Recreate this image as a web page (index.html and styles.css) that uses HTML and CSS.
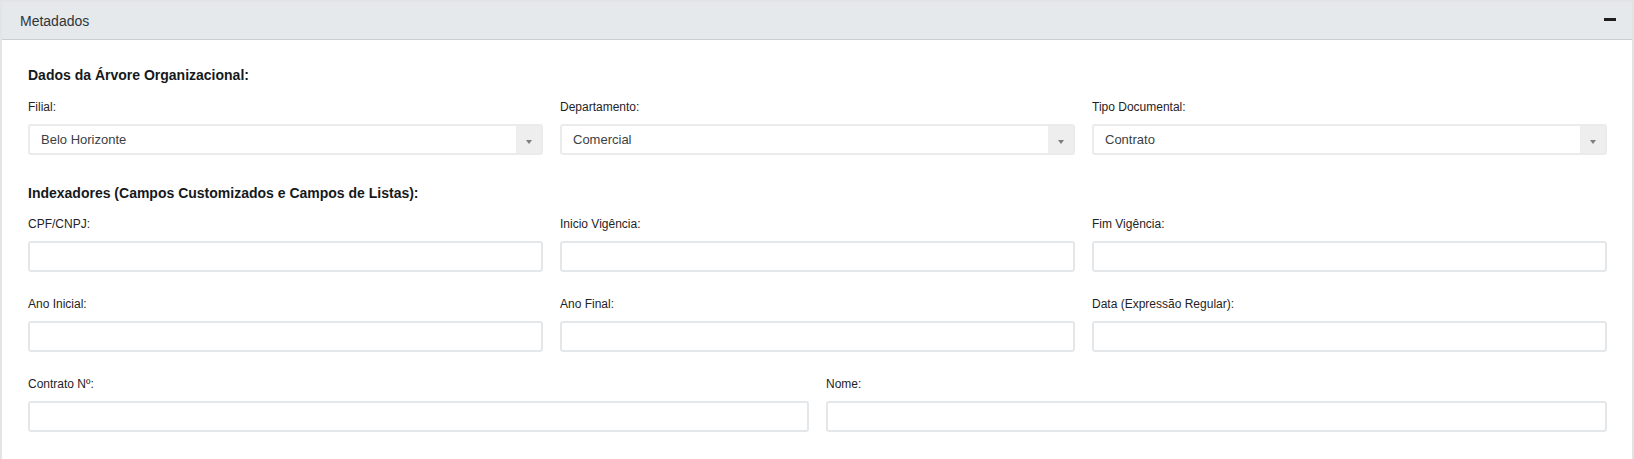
FILE: index.html
```html
<!DOCTYPE html>
<html lang="pt-BR">
<head>
<meta charset="utf-8">
<title>Metadados</title>
<link rel="stylesheet" href="styles.css">
</head>
<body>
<div class="card">
  <div class="card-header">
    <span class="card-title">Metadados</span>
    <span class="collapse-icon" aria-label="Recolher"></span>
  </div>
  <div class="card-body">
    <div class="section-title">Dados da Árvore Organizacional:</div>
    <div class="grid grid-3">
      <div class="field">
        <label class="field-label">Filial:</label>
        <div class="select"><span class="select-value">Belo Horizonte</span><span class="select-arrow"></span></div>
      </div>
      <div class="field">
        <label class="field-label">Departamento:</label>
        <div class="select"><span class="select-value">Comercial</span><span class="select-arrow"></span></div>
      </div>
      <div class="field">
        <label class="field-label">Tipo Documental:</label>
        <div class="select"><span class="select-value">Contrato</span><span class="select-arrow"></span></div>
      </div>
    </div>

    <div class="section-title section-gap">Indexadores (Campos Customizados e Campos de Listas):</div>
    <div class="grid grid-3 rows">
      <div class="field">
        <label class="field-label">CPF/CNPJ:</label>
        <input class="input" type="text">
      </div>
      <div class="field">
        <label class="field-label">Inicio Vigência:</label>
        <input class="input" type="text">
      </div>
      <div class="field">
        <label class="field-label">Fim Vigência:</label>
        <input class="input" type="text">
      </div>
      <div class="field">
        <label class="field-label">Ano Inicial:</label>
        <input class="input" type="text">
      </div>
      <div class="field">
        <label class="field-label">Ano Final:</label>
        <input class="input" type="text">
      </div>
      <div class="field">
        <label class="field-label">Data (Expressão Regular):</label>
        <input class="input" type="text">
      </div>
    </div>
    <div class="grid grid-2 last-row">
      <div class="field">
        <label class="field-label">Contrato Nº:</label>
        <input class="input" type="text">
      </div>
      <div class="field">
        <label class="field-label">Nome:</label>
        <input class="input" type="text">
      </div>
    </div>
  </div>
</div>
</body>
</html>
```
FILE: styles.css
```css
* { box-sizing: border-box; }
html, body { margin: 0; padding: 0; background: #fff; }
body {
  font-family: "Liberation Sans", Arial, sans-serif;
  color: #23282c;
}
.card {
  border: 2px solid #e2e4e6;
  border-bottom: none;
  background: #fff;
}
.card-header {
  height: 38px;
  background: #e6e9ec;
  border-bottom: 1px solid #c8ced3;
  display: flex;
  align-items: center;
  justify-content: space-between;
  padding: 0 16px 0 18px;
}
.card-title {
  font-size: 14px;
  color: #2f353a;
}
.collapse-icon {
  width: 12px;
  height: 3px;
  background: #1e1e1e;
  margin-top: -2px;
}
.card-body {
  padding: 27px 25px 40px 26px;
}
.section-title {
  font-size: 14px;
  font-weight: bold;
  line-height: 16px;
  margin-bottom: 17px;
  color: #15191c;
}
.section-gap { margin-top: 30px; margin-bottom: 16px; }
.grid { display: grid; column-gap: 17px; }
.grid-3 { grid-template-columns: repeat(3, 1fr); }
.grid-2 { grid-template-columns: repeat(2, 1fr); }
.rows { row-gap: 25px; }
.last-row { margin-top: 25px; }
.field { display: flex; flex-direction: column; min-width: 0; }
.field-label {
  font-size: 12px;
  line-height: 14px;
  margin-bottom: 10px;
  color: #1f2326;
}
.select {
  height: 31px;
  border: 2px solid #e9ebed;
  border-radius: 3px;
  display: flex;
  align-items: center;
  background: #fff;
}
.select-value {
  flex: 1;
  font-size: 13px;
  color: #3a3f44;
  padding-left: 11px;
}
.select-arrow {
  width: 25px;
  align-self: stretch;
  background: #eeeeee;
  display: flex;
  align-items: center;
  justify-content: center;
  padding-top: 5px;
}
.select-arrow::before {
  content: "";
  width: 0;
  height: 0;
  border-left: 3.5px solid transparent;
  border-right: 3.5px solid transparent;
  border-top: 4px solid #7d7d7d;
}
.input {
  height: 31px;
  width: 100%;
  border: 2px solid #e4e7ea;
  border-radius: 3px;
  background: #fff;
  font-family: inherit;
  font-size: 13px;
  padding: 0 10px;
  outline: none;
}
```
